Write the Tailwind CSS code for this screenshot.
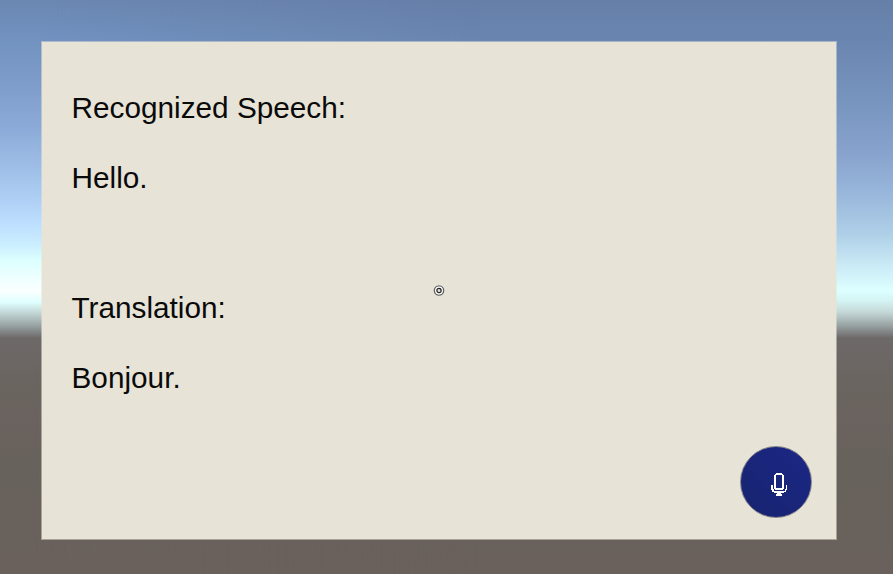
<!DOCTYPE html>
<html lang="en">
<head>
<meta charset="utf-8">
<title>Speech Translation</title>
<script src="https://cdn.jsdelivr.net/npm/@tailwindcss/browser@4"></script>
</head>
<body class="h-screen overflow-hidden">
<div class="relative h-[574px] w-[893px] overflow-hidden bg-[linear-gradient(180deg,#657fa8_0px,#6a86b0_40px,#7794be_100px,#88a4ce_155px,#97b4da_190px,#b0d0e8_235px,#ccecf7_268px,#dcffff_290px,#d5f5f5_300px,#c5d8d8_312px,#9aa5a5_325px,#6e6969_338px,#6a6560_380px,#6a625e_430px,#67625b_470px,#6a615c_574px)]">
  <div class="absolute inset-0 bg-[linear-gradient(180deg,#6b87b2_0px,#7292c0_40px,#7f9dca_85px,#8dabd8_130px,#9dbde6_165px,#aecef4_198px,#bfe0ff_226px,#ccefff_246px,#dcffff_260px,#fbffff_291px,#e0ffff_302px,#c5d9d9_312px,#9aa5a5_325px,#6e6969_338px,#6a6560_380px,#6a625e_430px,#67625b_470px,#6a615c_574px)] [mask-image:linear-gradient(90deg,black_0px,black_30px,transparent_480px)]"></div>
  <main class="relative ml-[41px] flex h-[540px] w-[796px] pt-[41px]">
    <section class="flex w-full flex-col border border-[#e7e3d7]/50 bg-[#e7e3d7] bg-clip-padding pl-[29.5px] font-['Liberation_Sans',Arial,sans-serif] text-[29.75px] text-[#0a0a0a]">
      <h1 class="mt-[48px] leading-[36px]">Recognized Speech:</h1>
      <p class="mt-[34px] leading-[36px]">Hello.</p>
      <h2 class="mt-[94px] leading-[36px]">Translation:</h2>
      <p class="mt-[34px] leading-[36px]">Bonjour.</p>
      <button aria-label="Record" class="mt-[50px] mr-[24px] h-[72px] w-[72px] self-end rounded-full border border-[#85858a] bg-linear-to-tr from-[#17246f] to-[#1b2785]">
        <svg class="h-[70px] w-[70px]" viewBox="741 447 70 70" fill="#fff" shape-rendering="crispEdges">
          <path d="M776 473h6v1h1v1h1v14h-1v1h-8v-1h-1v-14h1v-1h1zM776 475v13h6v-13z" fill-rule="evenodd"/>
          <path d="M771 485h2v4h1v2h11v-2h1v-4h1v5h-1v2h-2v1h-3v1h1v2h-6v-2h1v-1h-3v-1h-2v-2h-1z"/>
        </svg>
      </button>
    </section>
  </main>
  <svg class="absolute left-[433px] top-[285px] h-[12px] w-[12px]" viewBox="0 0 12 12" fill="none" aria-hidden="true">
    <circle cx="6" cy="5.5" r="4.5" stroke="#666" stroke-width="1.7"/>
    <circle cx="6" cy="5.5" r="3.3" stroke="#fff" stroke-width="1.2"/>
    <circle cx="6" cy="5.5" r="2.1" stroke="#222" stroke-width="1.2"/>
    <path d="M5.3 4.5l1.4 2" stroke="#ddd" stroke-width="1"/>
  </svg>
</div>
</body>
</html>
